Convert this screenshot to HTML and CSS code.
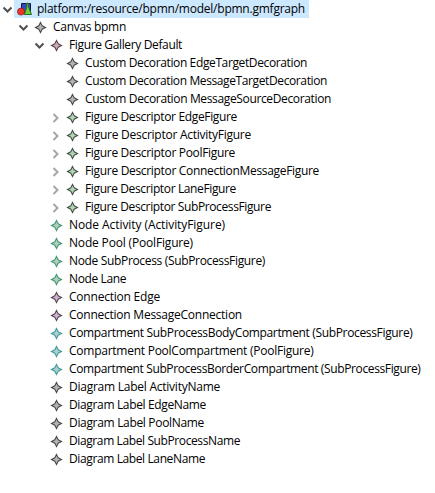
FILE: index.html
```html
<!DOCTYPE html>
<html lang="en">
<head>
<meta charset="utf-8">
<title>bpmn.gmfgraph</title>
<link rel="stylesheet" href="styles.css">
</head>
<body>
<div class="tree" id="tree" role="tree"></div>
<script src="tree.js"></script>
</body>
</html>
```
FILE: styles.css
```css
body {
  margin: 0;
  background: #fff;
  color: #000;
  font: 12px/18px "Open Sans", "Noto Sans", sans-serif;
}
.tree { display: flex; flex-direction: column; align-items: flex-start; }
.row { display: flex; height: 18px; white-space: nowrap; }
.level-1 { padding-left: 16px; }
.level-2 { padding-left: 32px; }
.level-3 { padding-left: 48px; }
.toggle { width: 14px; height: 18px; flex: none; }
.toggle path { fill: none; stroke: #505050; stroke-width: 2; }
.toggle .closed { stroke: #a6a6a6; }
.item { display: flex; padding: 0 4px 0 2px; height: 18px; }
.selected .item { background: #cce8ff; }
.icon { width: 17px; height: 18px; flex: none; margin-right: 4px; }
.label { display: block; height: 18px; }
.star { fill: #b4b4b4; stroke: #4b4b4b; stroke-width: 1.1; }
.star.rose { fill: #c4b2b8; stroke: #65414c; }
.star.green { fill: #afd8b1; stroke: #48504b; }
.star.node { fill: #b3cfc1; stroke: #429872; }
.star.violet { fill: #d1b0d1; stroke: #544b54; }
.star.teal { fill: #b0cfd0; stroke: #409c9b; }
```
FILE: tree.js
```js
// [level, toggle, icon tone, label, label width in px]
const rows = [
  [0, 'open', 'root', 'platform:/resource/bpmn/model/bpmn.gmfgraph', 268],
  [1, 'open', '', 'Canvas bpmn', 73],
  [2, 'open', 'rose', 'Figure Gallery Default', 113],
  [3, '', '', 'Custom Decoration EdgeTargetDecoration', 222],
  [3, '', '', 'Custom Decoration MessageTargetDecoration', 242],
  [3, '', '', 'Custom Decoration MessageSourceDecoration', 246],
  [3, 'closed', 'green', 'Figure Descriptor EdgeFigure', 152],
  [3, 'closed', 'green', 'Figure Descriptor ActivityFigure', 166],
  [3, 'closed', 'green', 'Figure Descriptor PoolFigure', 150],
  [3, 'closed', 'green', 'Figure Descriptor ConnectionMessageFigure', 234],
  [3, 'closed', 'green', 'Figure Descriptor LaneFigure', 151],
  [3, 'closed', 'green', 'Figure Descriptor SubProcessFigure', 186],
  [2, '', 'node', 'Node Activity (ActivityFigure)', 156],
  [2, '', 'node', 'Node Pool (PoolFigure)', 124],
  [2, '', 'node', 'Node SubProcess (SubProcessFigure)', 196],
  [2, '', 'node', 'Node Lane', 57],
  [2, '', 'violet', 'Connection Edge', 91],
  [2, '', 'violet', 'Connection MessageConnection', 173],
  [2, '', 'teal', 'Compartment SubProcessBodyCompartment (SubProcessFigure)', 343.5],
  [2, '', 'teal', 'Compartment PoolCompartment (PoolFigure)', 244.5],
  [2, '', 'teal', 'Compartment SubProcessBorderCompartment (SubProcessFigure)', 351.5],
  [2, '', '', 'Diagram Label ActivityName', 151],
  [2, '', '', 'Diagram Label EdgeName', 137],
  [2, '', '', 'Diagram Label PoolName', 135],
  [2, '', '', 'Diagram Label SubProcessName', 171],
  [2, '', '', 'Diagram Label LaneName', 136]
];

const toggles = {
  open: '<path d="M3.5 7.5 7.5 11.5 11.5 7.5"/>',
  closed: '<path class="closed" d="M5.5 14 9.5 10 5.5 6"/>'
};

const rootIcon = '<path d="M5.5 3.5h9v9h-9z" fill="#3445c8" stroke="#171b43"/>' +
  '<path d="M10.8 3.2h1.4v3l3.3 8.3H8.3L10.5 8z" fill="#68d332" stroke="#257029"/>' +
  '<circle cx="5" cy="11.6" r="3.5" fill="#e63727" stroke="#961e19" stroke-width=".8"/>';

const star = tone => `<path class="star ${tone}" d="M8.5 4.5 10.2 7.8 13.5 9.5 10.2 11.2 8.5 14.5 6.8 11.2 3.5 9.5 6.8 7.8z"/>`;

const tree = document.getElementById('tree');
for (const [level, toggle, tone, text, width] of rows) {
  const row = document.createElement('div');
  row.className = `row level-${level}${level === 0 ? ' selected' : ''}`;
  row.setAttribute('role', 'treeitem');
  row.innerHTML = `<svg class="toggle">${toggles[toggle] || ''}</svg>` +
    `<div class="item"><svg class="icon">${tone === 'root' ? rootIcon : star(tone)}</svg>` +
    `<span class="label">${text}</span></div>`;
  tree.append(row);
  const label = row.querySelector('.label');
  const extra = width - label.getBoundingClientRect().width;
  label.style.letterSpacing = `${extra / text.length}px`;
}
```
